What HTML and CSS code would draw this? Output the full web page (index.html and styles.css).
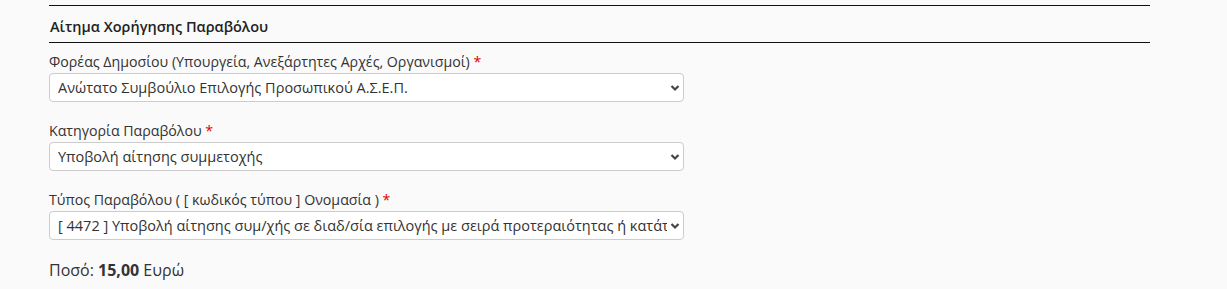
FILE: index.html
```
<!DOCTYPE html>
<html lang="el">
<head>
  <meta charset="UTF-8">
  <title>Αίτημα Χορήγησης Παραβόλου</title>
  <link rel="stylesheet" href="styles.css">
</head>
<body>
  <div class="panel">
    <h4 class="panel-title">Αίτημα Χορήγησης Παραβόλου</h4>

    <div class="form-group">
      <label for="foreas">Φορέας Δημοσίου (Υπουργεία, Ανεξάρτητες Αρχές, Οργανισμοί) <span class="req">*</span></label>
      <select id="foreas" class="form-control">
        <option>Ανώτατο Συμβούλιο Επιλογής Προσωπικού Α.Σ.Ε.Π.</option>
      </select>
    </div>

    <div class="form-group">
      <label for="katigoria">Κατηγορία Παραβόλου <span class="req">*</span></label>
      <select id="katigoria" class="form-control">
        <option>Υποβολή αίτησης συμμετοχής</option>
      </select>
    </div>

    <div class="form-group">
      <label for="typos">Τύπος Παραβόλου ( [ κωδικός τύπου ] Ονομασία ) <span class="req">*</span></label>
      <select id="typos" class="form-control">
        <option>[ 4472 ] Υποβολή αίτησης συμ/χής σε διαδ/σία επιλογής με σειρά προτεραιότητας ή κατάταξης</option>
      </select>
    </div>

    <p class="amount">Ποσό: <strong>15,00</strong> Ευρώ</p>
  </div>
</body>
</html>
```

FILE: styles.css
```
body {
  font-family: "Open Sans", Arial, sans-serif;
  margin: 0;
  padding: 5px 0 0 49px;
  background: #fafafa;
  color: #333;
}
.panel {
  width: 1101px;
}
.panel-title {
  margin: 0 0 9px;
  padding: 11px 1px 5px;
  border-top: 1px solid #111;
  border-bottom: 1px solid #111;
  font-size: 14.5px;
  font-weight: 600;
  line-height: 20px;
  color: #222;
}
.form-group {
  margin-bottom: 19px;
}
label {
  display: block;
  font-size: 14.2px;
  line-height: 20px;
  margin-bottom: 1px;
  color: #333;
}
.req {
  color: #d00;
}
.form-control {
  display: block;
  width: 635px;
  height: 29px;
  padding: 0 16px 0 8px;
  font-family: "Open Sans", Arial, sans-serif;
  font-size: 14.5px;
  color: #333;
  background: #fff url("data:image/svg+xml;utf8,<svg xmlns='http://www.w3.org/2000/svg' width='10' height='8' viewBox='0 0 10 8'><path d='M1.5 2 L5 5.5 L8.5 2' fill='none' stroke='%23444' stroke-width='2.2'/></svg>") no-repeat right 3px center;
  border: 1px solid #ccc;
  border-radius: 4px;
  appearance: none;
  -webkit-appearance: none;
}
.amount {
  margin: 0;
  font-size: 16px;
  line-height: 22px;
}
.amount strong {
  font-weight: 700;
}
```
